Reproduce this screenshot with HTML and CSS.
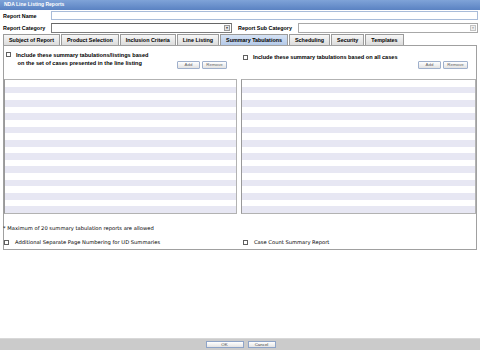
FILE: index.html
```html
<!DOCTYPE html>
<html>
<head>
<meta charset="utf-8">
<title>NDA Line Listing Reports</title>
<link rel="stylesheet" href="styles.css">
</head>
<body>
<div class="title">NDA Line Listing Reports</div>
<div class="form">
  <div class="row">
    <label class="lbl">Report Name</label>
    <div class="input"></div>
  </div>
  <div class="row">
    <label class="lbl">Report Category</label>
    <div class="select cat"><span class="arrow">&#9660;</span></div>
    <label class="lbl sub">Report Sub Category</label>
    <div class="select subcat"><span class="arrow dis">&#9660;</span></div>
  </div>
</div>
<div class="tabs">
  <div class="tab">Subject of Report</div>
  <div class="tab">Product Selection</div>
  <div class="tab">Inclusion Criteria</div>
  <div class="tab">Line Listing</div>
  <div class="tab active">Summary Tabulations</div>
  <div class="tab">Scheduling</div>
  <div class="tab">Security</div>
  <div class="tab">Templates</div>
</div>
<div class="panel">
  <div class="cols">
    <div class="col">
      <div class="head left">
        <span class="cb"></span>
        <div class="htext">Include these summary tabulations/listings based<br>&nbsp;on the set of cases presented in the line listing</div>
        <div class="btns"><button class="btn add">Add</button><button class="btn rem">Remove</button></div>
      </div>
      <div class="list"></div>
    </div>
    <div class="col">
      <div class="head right">
        <span class="cb"></span>
        <div class="htext">Include these summary tabulations based on all cases</div>
        <div class="btns"><button class="btn add">Add</button><button class="btn rem">Remove</button></div>
      </div>
      <div class="list"></div>
    </div>
  </div>
  <div class="note">* Maximum of 20 summary tabulation reports are allowed</div>
  <div class="opts">
    <div class="opt first"><span class="cb"></span><span class="otext">Additional Separate Page Numbering for UD Summaries</span></div>
    <div class="opt second"><span class="cb"></span><span class="otext">Case Count Summary Report</span></div>
  </div>
</div>
<div class="spacer"></div>
<div class="footer">
  <button class="fbtn ok">OK</button>
  <button class="fbtn cancel">Cancel</button>
</div>
</body>
</html>
```

FILE: styles.css
```css
html, body {
  margin: 0;
  padding: 0;
}
body {
  width: 480px;
  height: 350px;
  display: flex;
  flex-direction: column;
  background: #ffffff;
  font-family: "Liberation Sans", Arial, sans-serif;
  font-size: 5.4px;
  color: #000;
  overflow: hidden;
}
.title {
  height: 10px;
  line-height: 9px;
  padding-left: 4px;
  background: linear-gradient(#7fa3d8, #5a82c2);
  color: #fff;
  font-weight: bold;
  font-size: 5px;
}
.form {
  padding: 1px 2px 0 3px;
  display: flex;
  flex-direction: column;
  gap: 3px;
}
.row {
  display: flex;
  align-items: center;
  height: 9px;
}
.lbl {
  width: 48px;
  font-weight: bold;
}
.input {
  flex: 1;
  height: 7px;
  border: 1px solid #a9bcd9;
  background: #fff;
}
.select {
  height: 8px;
  border: 1px solid #7c7c7c;
  border-top-color: #666;
  background: #fff;
  display: flex;
  justify-content: flex-end;
  align-items: stretch;
}
.select.cat { width: 179px; }
.select.subcat { flex: 1; border-color: #a8a8a8; }
.lbl.sub { width: auto; margin: 0 6px 0 6px; }
.arrow {
  width: 6px;
  margin: 1px 1px 1px 0;
  background: #e4e4e4;
  border: 1px solid #9a9a9a;
  font-size: 3px;
  line-height: 5px;
  text-align: center;
  color: #000;
  box-sizing: border-box;
}
.arrow.dis { color: #999; border-color: #c4c4c4; background: #efefef; }

.tabs {
  display: flex;
  gap: 1px;
  padding-left: 3px;
  margin-top: 2px;
  height: 11px;
}
.tab {
  height: 10px;
  line-height: 10px;
  padding: 0 5px;
  border: 1px solid #9b9b9b;
  border-bottom: none;
  background: linear-gradient(#f7f7f7, #dcdcdc);
  font-weight: bold;
  white-space: nowrap;
}
.tab.active {
  background: linear-gradient(#d6e2f4, #b4c9e8);
}

.panel {
  margin: 0 3px;
  height: 205px;
  border: 1px solid #a0a0a0;
  box-sizing: border-box;
  display: flex;
  flex-direction: column;
}
.cols {
  display: grid;
  grid-template-columns: 233px 1fr;
  gap: 4px;
}
.col {
  display: flex;
  flex-direction: column;
}
.head {
  height: 33px;
  display: flex;
  align-items: flex-start;
  padding-top: 5px;
  box-sizing: border-box;
}
.head.left { padding-left: 2px; padding-right: 10px; }
.head.right { padding-left: 2px; padding-right: 8px; }
.cb {
  display: inline-block;
  width: 5px;
  height: 5px;
  border: 1px solid #606060;
  background: #fff;
  box-sizing: border-box;
  flex: none;
}
.head.left .cb { margin-top: 1px; }
.head.right .cb { margin-top: 4px; }
.htext {
  margin-left: 5px;
  line-height: 8px;
  font-size: 5.6px;
  font-weight: bold;
  white-space: nowrap;
}
.head.right .htext { margin-top: 2px; }
.btns {
  margin-left: auto;
  margin-top: 10px;
  display: flex;
  gap: 2px;
}
.btn {
  height: 8px;
  padding: 0;
  border: 1px solid #9fb0cc;
  border-radius: 1px;
  background: linear-gradient(#ffffff, #e2e2e2);
  font-family: "Liberation Sans", Arial, sans-serif;
  font-size: 4.4px;
  color: #666;
  line-height: 6px;
}
.btn.add { width: 23px; }
.btn.rem { width: 25px; }
.list {
  height: 135px;
  border: 1px solid #b2b2b2;
  border-left-color: #999;
  box-sizing: border-box;
  background: repeating-linear-gradient(#ffffff 0 6.65px, #e7e7f3 6.65px 13.3px);
}
.note {
  margin-top: 10px;
  line-height: 8px;
  font-family: "DejaVu Sans", Verdana, sans-serif;
  font-size: 5.2px;
  padding-left: 0;
  margin-left: -1px;
}
.opts {
  margin-top: 6px;
  display: grid;
  grid-template-columns: 233px 1fr;
  gap: 4px;
}
.opt {
  display: flex;
  align-items: center;
  height: 8px;
}
.opt.second { padding-left: 2px; }
.otext {
  margin-left: 6px;
  font-family: "DejaVu Sans", Verdana, sans-serif;
  font-size: 5.2px;
  white-space: nowrap;
}
.spacer { flex: 1; }
.footer {
  height: 12px;
  background: #cbcbcb;
  border-top: 1px solid #d8d8d8;
  box-sizing: border-box;
  display: flex;
  justify-content: center;
  align-items: flex-start;
  gap: 4px;
  padding-top: 2px;
  padding-left: 1px;
}
.fbtn {
  height: 7px;
  padding: 0;
  border: 1px solid #8ea4c8;
  background: linear-gradient(#ffffff, #e4e4e4);
  font-family: "Liberation Sans", Arial, sans-serif;
  font-size: 4.4px;
  line-height: 5px;
  color: #444;
}
.fbtn.ok { width: 38px; }
.fbtn.cancel { width: 28px; }
```
